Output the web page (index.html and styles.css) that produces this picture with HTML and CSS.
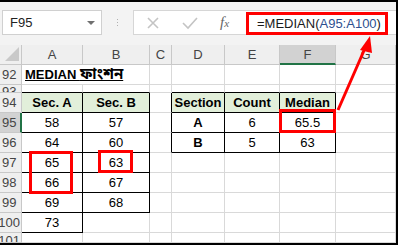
FILE: index.html
```html
<!DOCTYPE html>
<html lang="bn">
<head>
    <meta charset="UTF-8">
    <title>MEDIAN ফাংশন</title>
    <link rel="stylesheet" href="styles.css">
</head>
<body>
    <div class="window">
        <div class="formula-row">
            <div class="namebox">
                <span>F95</span>
                <span class="caret"></span>
            </div>
            <div class="grip"></div>
            <div class="fbar">
                <svg class="fbtn" width="14" height="14" viewBox="0 0 14 14"><path d="M2 2 L12 12 M12 2 L2 12" stroke="#c4c4c4" stroke-width="1.6" fill="none"/></svg>
                <svg class="fbtn" width="16" height="14" viewBox="0 0 16 14"><path d="M1 7 L6 12 L15 2" stroke="#c4c4c4" stroke-width="1.6" fill="none"/></svg>
                <span class="fx"><i>f</i><span class="fx-x">x</span></span>
                <div class="formula">=MEDIAN(<span class="ref">A95:A100</span>)</div>
            </div>
        </div>

        <div class="sheet">
            <!-- column headers -->
            <div class="c corner"><svg width="14" height="14" viewBox="0 0 14 14"><path d="M14 0 L14 14 L0 14 Z" fill="#c9c9c9"/></svg></div>
            <div class="c ch">A</div>
            <div class="c ch">B</div>
            <div class="c ch">C</div>
            <div class="c ch">D</div>
            <div class="c ch">E</div>
            <div class="c ch sel">F</div>
            <div class="c ch">G</div>

            <!-- 92 -->
            <div class="c rh">92</div>
            <div class="c title"><span>MEDIAN <span class="bn">ফাংশন</span></span></div>
            <div class="c"></div>
            <div class="c"></div>
            <div class="c"></div>
            <div class="c"></div>
            <div class="c"></div>

            <!-- 93 (almost hidden) -->
            <div class="c rh short">93</div>
            <div class="c kb"></div>
            <div class="c kb"></div>
            <div class="c"></div>
            <div class="c kb"></div>
            <div class="c kb"></div>
            <div class="c kb"></div>
            <div class="c"></div>

            <!-- 94 -->
            <div class="c rh">94</div>
            <div class="c k head">Sec. A</div>
            <div class="c k head">Sec. B</div>
            <div class="c kr"></div>
            <div class="c k head">Section</div>
            <div class="c k head">Count</div>
            <div class="c k head">Median</div>
            <div class="c"></div>

            <!-- 95 -->
            <div class="c rh sel">95</div>
            <div class="c k">58</div>
            <div class="c k">57</div>
            <div class="c kr"></div>
            <div class="c k bold">A</div>
            <div class="c k">6</div>
            <div class="c k">65.5</div>
            <div class="c"></div>

            <!-- 96 -->
            <div class="c rh">96</div>
            <div class="c k">64</div>
            <div class="c k">60</div>
            <div class="c kr"></div>
            <div class="c k bold">B</div>
            <div class="c k">5</div>
            <div class="c k">63</div>
            <div class="c"></div>

            <!-- 97 -->
            <div class="c rh">97</div>
            <div class="c k">65</div>
            <div class="c k">63</div>
            <div class="c"></div>
            <div class="c"></div>
            <div class="c"></div>
            <div class="c"></div>
            <div class="c"></div>

            <!-- 98 -->
            <div class="c rh">98</div>
            <div class="c k">66</div>
            <div class="c k">67</div>
            <div class="c"></div>
            <div class="c"></div>
            <div class="c"></div>
            <div class="c"></div>
            <div class="c"></div>

            <!-- 99 -->
            <div class="c rh">99</div>
            <div class="c k">69</div>
            <div class="c k">68</div>
            <div class="c"></div>
            <div class="c"></div>
            <div class="c"></div>
            <div class="c"></div>
            <div class="c"></div>

            <!-- 100 -->
            <div class="c rh wide">100</div>
            <div class="c k">73</div>
            <div class="c"></div>
            <div class="c"></div>
            <div class="c"></div>
            <div class="c"></div>
            <div class="c"></div>
            <div class="c"></div>

            <!-- 101 -->
            <div class="c rh wide short-bottom">101</div>
            <div class="c"></div>
            <div class="c"></div>
            <div class="c"></div>
            <div class="c"></div>
            <div class="c"></div>
            <div class="c"></div>
            <div class="c"></div>

            <!-- red marks, laid over the cells -->
            <div class="mark mark-a"></div>
            <div class="mark mark-b"></div>
            <div class="mark mark-f"></div>
        </div>

        <svg class="arrow" width="398" height="245" viewBox="0 0 398 245">
            <line x1="338" y1="110" x2="366" y2="46" stroke="#ff0000" stroke-width="3"/>
            <polygon points="370,36 360,50 372,53" fill="#ff0000"/>
        </svg>
    </div>
</body>
</html>
```

FILE: styles.css
```css
body {
    margin: 0;
    font-family: "Liberation Sans", Arial, "Noto Sans Bengali", "Lohit Bengali", sans-serif;
    font-size: 13px;
    color: #000;
}
.window {
    position: relative;
    width: 396px;
    height: 241px;
    border-top: 2px solid #000;
    border-right: 2px solid #000;
    border-bottom: 2px solid #000;
    overflow: hidden;
    background: #fff;
}
.formula-row {
    height: 43px;
    background: #f3f3f3;
    display: flex;
    align-items: flex-start;
    padding-top: 8px;
    box-sizing: border-box;
}
.namebox {
    margin-left: 2px;
    width: 100px;
    height: 25px;
    box-sizing: border-box;
    border: 1px solid #d0d0d0;
    background: #fff;
    display: flex;
    align-items: center;
    justify-content: space-between;
    padding: 0 6px 0 7px;
    color: #222;
}
.caret {
    width: 0;
    height: 0;
    border-left: 4px solid transparent;
    border-right: 4px solid transparent;
    border-top: 4px solid #707070;
}
.grip {
    width: 31px;
    height: 25px;
    background-image:
        radial-gradient(circle, #b0b0b0 0.8px, transparent 1px),
        radial-gradient(circle, #b0b0b0 0.8px, transparent 1px),
        radial-gradient(circle, #b0b0b0 0.8px, transparent 1px);
    background-size: 3px 3px;
    background-repeat: no-repeat;
    background-position: 14px 8px, 14px 11px, 14px 14px;
}
.fbar {
    flex: 1;
    height: 25px;
    box-sizing: border-box;
    border: 1px solid #d6d6d6;
    border-right: none;
    background: #fff;
    display: flex;
    align-items: center;
    padding-left: 12px;
}
.fbtn {
    margin-right: 22px;
}
.fx {
    font-family: "Liberation Serif", serif;
    color: #666;
    font-size: 15px;
    width: 26px;
}
.fx-x {
    font-size: 11px;
    font-style: italic;
}
.formula {
    border: 3px solid #f00;
    height: 23px;
    box-sizing: border-box;
    margin-top: 1px;
    padding-left: 8px;
    width: 142px;
    display: flex;
    align-items: center;
    color: #1a1a1a;
}
.ref {
    color: #2d4f8f;
}
.sheet {
    position: relative;
    display: grid;
    grid-template-columns: 22px 61px 67px 22px 53px 55px 56px 1fr;
    grid-template-rows: 20px 20px 8px repeat(7, 20px) 1fr;
    height: 198px;
}
.c {
    border-right: 1px solid #d9d9d9;
    border-bottom: 1px solid #d9d9d9;
    display: flex;
    align-items: center;
    justify-content: center;
    overflow: hidden;
    white-space: nowrap;
}
.ch, .rh, .corner {
    background: #efefef;
    color: #444;
    border-color: #c8c8c8;
}
.corner {
    align-items: flex-end;
    justify-content: flex-end;
    padding: 0 2px 3px 0;
}
.rh {
    justify-content: flex-start;
    padding-left: 2px;
}
.rh.wide {
    justify-content: flex-end;
    padding: 0 1px 0 0;
}
.short {
    align-items: flex-start;
    line-height: 14px;
}
.short-bottom {
    align-items: flex-start;
    padding-top: 2px;
}
.ch.sel {
    background: #d2d2d2;
    border-bottom: 2px solid #217346;
}
.rh.sel {
    background: #d2d2d2;
    border-right: 2px solid #217346;
}
.title {
    grid-column: span 2;
    justify-content: flex-start;
    padding-left: 3px;
    font-weight: bold;
}
.title > span {
    text-decoration: underline;
}
.bn {
    font-size: 15px;
}
.k {
    border-right-color: #000;
    border-bottom-color: #000;
}
.kb {
    border-bottom-color: #000;
}
.kr {
    border-right-color: #000;
}
.head {
    background: #e2efda;
    font-weight: bold;
}
.bold {
    font-weight: bold;
}
.mark {
    position: absolute;
    border: 3px solid #f00;
}
.mark-a {
    grid-column: 2 / 3;
    grid-row: 7 / 9;
    inset: -2px 10px -1px 7px;
}
.mark-b {
    grid-column: 3 / 4;
    grid-row: 7 / 8;
    inset: -3px 17px 0 15px;
}
.mark-f {
    grid-column: 7 / 8;
    grid-row: 5 / 6;
    inset: -4px 0 0 -1px;
}
.arrow {
    position: absolute;
    left: 0;
    top: -2px;
    pointer-events: none;
}
```
